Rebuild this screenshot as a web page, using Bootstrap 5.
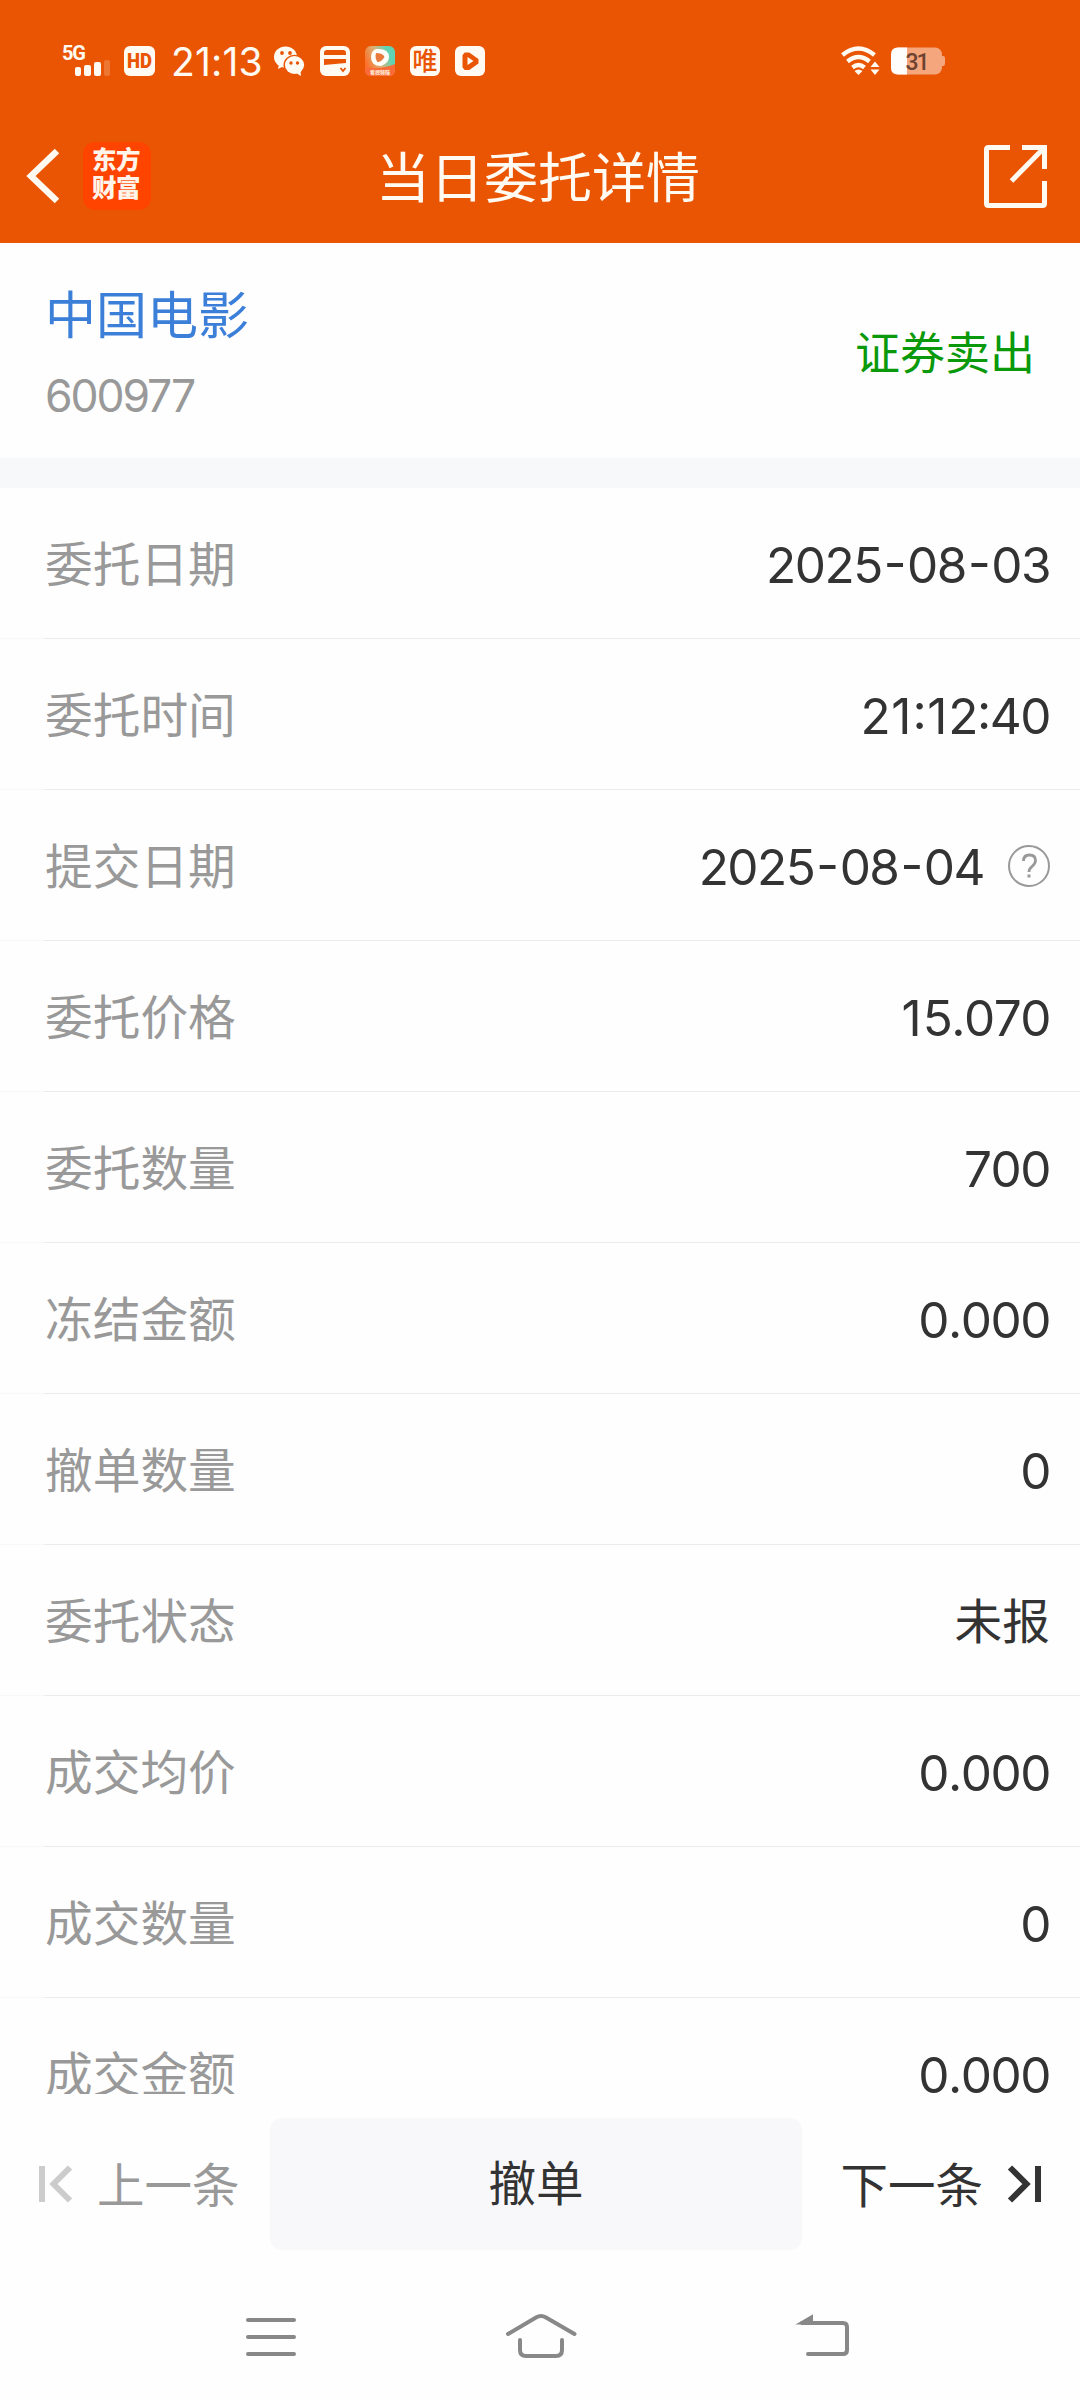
<!DOCTYPE html>
<html lang="zh-CN">
<head>
<meta charset="utf-8">
<meta name="viewport" content="width=device-width, initial-scale=1">
<title>当日委托详情</title>
<link rel="stylesheet" href="https://cdn.jsdelivr.net/npm/bootstrap@5.3.0/dist/css/bootstrap.min.css">
<style>
body{width:1080px;height:2400px;overflow:hidden;background:#fefefe;color:#333;font-family:Inter,"Noto Sans CJK SC",sans-serif;line-height:1}
svg{display:block;flex:none}
.orange-top{background:#ea5504;height:243px;color:#fffaf2}
.status-bar{height:122px;padding-left:62px;padding-right:135px}
.status-bar .sys-clock{font-size:39px;letter-spacing:.2px;margin-left:16px;width:95px;white-space:nowrap}
.app-icons{gap:15px;margin-left:8px}
.title-bar{height:108px;padding:0 33px 0 26px}
.title-text{font-size:54px;line-height:60px;padding:5px 0 0 3px}
.side-box{width:240px}
.brand-logo{width:68px;height:68px;border-radius:12px;background:#ff4400;color:#fff4ea;font:900 24.5px/28px "Noto Sans CJK SC",sans-serif;letter-spacing:-.6px;margin-left:24px;padding:0 2px 6px 0}
.stock-head{height:215px;padding:6px 45px 0}
.stock-name{font-size:51px;line-height:60px;color:#3b7fd9}
.stock-code{font-size:44.5px;letter-spacing:-2.1px;line-height:50px;color:#999;margin-top:25px}
.trade-side{font-size:45px;line-height:50px;color:#0a990a}
.gap-band{height:30px;background:#f7f8fa}
.detail-list{height:1606px;overflow:hidden}
.detail-row{height:151px;padding:6px 30px 0 45px;border-bottom:1px solid #ebebeb;border-image:linear-gradient(90deg,#f8f8f8 45px,#ebebeb 45px) 1;flex:none}
.row-label{font-size:47.7px;color:#999}
.row-value{font-size:49.5px;letter-spacing:-1.5px;color:#333;font-kerning:none;font-feature-settings:"case","calt" 0}
.row-value i{font-style:normal;letter-spacing:.5px;padding-left:2px}
.row-value b{font-weight:inherit;letter-spacing:1px;padding-left:2px}
.row-value.han{font-size:47.7px;letter-spacing:0}
.action-bar{height:188px;padding:24px 38px 0 38px;font-size:47.5px}
.cancel-btn{width:532px;height:132px;border-radius:12px;background:#f8f8fb;color:#333;font-size:47.5px;border:0}
.prev-box{width:232px;height:132px;color:#999;gap:24px}
.next-box{width:240px;height:132px;gap:24px}
.action-bar span{padding-top:3px}
.sys-nav{height:118px}
</style>
<script src="https://cdn.jsdelivr.net/npm/bootstrap@5.3.0/dist/js/bootstrap.bundle.min.js"></script>
</head>
<body class="d-flex flex-column">
<header class="orange-top flex-shrink-0">
  <div class="status-bar d-flex align-items-center">
    <svg width="49" height="32" viewBox="0 0 49 32" fill="#fffaf2" overflow="visible"><text x="0" y="14.500" font-family="Roboto" font-weight="700" font-size="20" textLength="24">5G</text><rect x="13" y="22" width="6" height="9" rx="2"/><rect x="22" y="20" width="7" height="11" rx="2"/><rect x="32" y="17" width="7" height="14" rx="2"/><rect x="42" y="15" width="6" height="16" rx="2" opacity=".2"/></svg>
    <svg width="31" height="30" viewBox="0 0 31 30" style="margin-left:13px"><rect width="31" height="30" rx="6" fill="#fffaf2"/><text x="3" y="22" font-family="Roboto" font-weight="900" font-size="19.500" fill="#ea5504" textLength="25" lengthAdjust="spacingAndGlyphs">HD</text></svg>
    <span class="sys-clock">21:13</span>
    <div class="app-icons d-flex">
      <svg width="31" height="30" viewBox="0 0 31 30"><path d="M4 23l1-5h6l-3 3z" fill="#fffaf2"/><ellipse cx="11.500" cy="11" rx="11.500" ry="10.500" fill="#fffaf2"/><g fill="#ea5504"><circle cx="8" cy="7" r="1.900"/><circle cx="16" cy="7" r="1.900"/><ellipse cx="20.500" cy="19" rx="11" ry="10.300"/></g><ellipse cx="20.500" cy="19" rx="9.600" ry="9" fill="#fffaf2"/><path d="M22 27l5 3-.5-5z" fill="#fffaf2"/><circle cx="17" cy="17" r="1.700" fill="#ea5504"/><circle cx="23.500" cy="17" r="1.700" fill="#ea5504"/></svg>
      <svg width="30" height="30" viewBox="0 0 30 30"><rect width="30" height="30" rx="6" fill="#fffaf2"/><path d="M4 9V7q0-3 3-3h16q3 0 3 3v2zM4 13h22v4L4 19z" fill="#ea5504"/><path d="M20.500 22l2.500 3 2.500-3" fill="none" stroke="#ea5504" stroke-width="1.800"/></svg>
      <svg width="30" height="30" viewBox="0 0 30 30"><defs><linearGradient id="vg" x1="0" x2="1" y1=".6" y2=".2"><stop stop-color="#ff6b25"/><stop offset=".45" stop-color="#d9b47a"/><stop offset=".8" stop-color="#5fd3b3"/></linearGradient></defs><rect width="30" height="30" rx="6" fill="url(#vg)"/><path d="M0 21q16 3 30-3v6q0 6-6 6H6q-6 0-6-6z" fill="#fb6b38"/><path d="M11 3q13-1 13 8 0 6-8 9-10 0-10-9 0-6 5-8z" fill="#fffdf8"/><path d="M11 7q7 0 8.500 4-3 5-7 5-3-4-1.500-9z" fill="#ea7a3c"/><text x="5" y="27.500" font-family="Noto Sans CJK SC" font-weight="900" font-size="5" fill="#ffe6d0">看视频赚</text></svg>
      <svg width="30" height="30" viewBox="0 0 30 30" overflow="visible"><rect width="30" height="30" rx="6" fill="#fffaf2"/><text x="2.500" y="24" font-family="Noto Sans CJK SC" font-weight="500" font-size="25" fill="#ea5504">唯</text></svg>
      <svg width="30" height="30" viewBox="0 0 30 30"><rect width="30" height="30" rx="6" fill="#fffaf2"/><path d="M10 7.500h4l8.500 6v3.500l-8.500 6H10L8.500 21V9.500z" fill="#ea5504" stroke="#ea5504" stroke-width="2" stroke-linejoin="round"/><path d="M12.500 11v8l6-4z" fill="#fffaf2"/></svg>
    </div>
    <svg class="ms-auto" width="105" height="30" viewBox="0 0 105 30"><g fill="none" stroke="#fffaf2" stroke-width="4.300"><path d="M2.500 9q16-13 32 0M7.500 15.500q11-9 22 0M12.500 21.500q6-5 12 0"/></g><path d="M14.500 25q4-3 8 0l-4 4z" fill="#fffaf2"/><path d="M30.500 21l4.500-5.500 4.500 5.500zM30.500 23.500h9L35 29z" fill="#fffaf2"/><rect x="51" y="1.500" width="51" height="27" rx="7" fill="#f5a67d"/><path d="M67 1.500h-9q-7 0-7 7v13q0 7 7 7h9z" fill="#fffdfb"/><path d="M102 10h1q2 0 2 2v6q0 2-2 2h-1z" fill="#f5a67d"/><text x="65.500" y="23.500" font-family="Roboto" font-weight="500" font-size="23" fill="#6e4130" textLength="24">31</text></svg>
  </div>
  <div class="title-bar d-flex align-items-center justify-content-between">
    <div class="side-box d-flex align-items-center">
      <svg width="33" height="56" viewBox="0 0 33 56"><path d="M31 3L5 28l26 25" fill="none" stroke="#fffaf2" stroke-width="6.500"/></svg>
      <div class="brand-logo d-flex flex-column justify-content-center text-center"><span>东方</span><span>财富</span></div>
    </div>
    <div class="title-text">当日委托详情</div>
    <div class="side-box d-flex justify-content-end">
      <svg width="63" height="63" viewBox="0 0 63 63"><g fill="none" stroke="#fffaf2" stroke-width="5"><path d="M26 2.500H4.500q-2 0-2 2v54q0 2 2 2h54q2 0 2-2V36M38 2.500h22.500V24M60 3L27.500 36"/></g></svg>
    </div>
  </div>
</header>
<section class="stock-head d-flex justify-content-between align-items-center flex-shrink-0">
  <div><div class="stock-name">中国电影</div><div class="stock-code">600977</div></div>
  <div class="trade-side">证券卖出</div>
</section>
<div class="gap-band flex-shrink-0"></div>
<main class="detail-list d-flex flex-column flex-shrink-0">
  <div class="detail-row d-flex align-items-center justify-content-between"><span class="row-label">委托日期</span><span class="row-value">2025<i>-</i>08<i>-</i>03</span></div>
  <div class="detail-row d-flex align-items-center justify-content-between"><span class="row-label">委托时间</span><span class="row-value">2<b>1</b>:<b>1</b>2:40</span></div>
  <div class="detail-row d-flex align-items-center"><span class="row-label me-auto">提交日期</span><span class="row-value">2025<i>-</i>08<i>-</i>04</span><svg class="ms-4" width="42" height="46" viewBox="0 0 42 46"><circle cx="21" cy="21" r="20" fill="none" stroke="#999" stroke-width="2"/><path d="M15.500 16q0-6 6-6t6 5.500q0 3-3.500 6-3 2.500-3 5.500" fill="none" stroke="#999" stroke-width="2.800"/><rect x="19.500" y="29.500" width="3" height="3" fill="#999"/></svg></div>
  <div class="detail-row d-flex align-items-center justify-content-between"><span class="row-label">委托价格</span><span class="row-value"><b>1</b>5.070</span></div>
  <div class="detail-row d-flex align-items-center justify-content-between"><span class="row-label">委托数量</span><span class="row-value">700</span></div>
  <div class="detail-row d-flex align-items-center justify-content-between"><span class="row-label">冻结金额</span><span class="row-value">0.000</span></div>
  <div class="detail-row d-flex align-items-center justify-content-between"><span class="row-label">撤单数量</span><span class="row-value">0</span></div>
  <div class="detail-row d-flex align-items-center justify-content-between"><span class="row-label">委托状态</span><span class="row-value han">未报</span></div>
  <div class="detail-row d-flex align-items-center justify-content-between"><span class="row-label">成交均价</span><span class="row-value">0.000</span></div>
  <div class="detail-row d-flex align-items-center justify-content-between"><span class="row-label">成交数量</span><span class="row-value">0</span></div>
  <div class="detail-row d-flex align-items-center justify-content-between"><span class="row-label">成交金额</span><span class="row-value">0.000</span></div>
</main>
<div class="action-bar d-flex flex-shrink-0">
  <div class="prev-box d-flex align-items-center"><svg width="35" height="38" viewBox="0 0 35 38"><path d="M4 1v36M32 2.500L15.500 19 32 35.500" fill="none" stroke="#ccc" stroke-width="6"/></svg><span>上一条</span></div>
  <button class="cancel-btn btn p-0" type="button"><span>撤单</span></button>
  <div class="next-box d-flex align-items-center justify-content-end"><span>下一条</span><svg width="35" height="38" viewBox="0 0 35 38"><path d="M31 1v36M3 2.500L19.500 19 3 35.500" fill="none" stroke="#333" stroke-width="6"/></svg></div>
</div>
<nav class="sys-nav flex-shrink-0">
  <svg width="1080" height="118" viewBox="0 2282 1080 118" fill="none" stroke="#888" stroke-width="4" stroke-linecap="round"><path d="M248 2320h46M248 2337h46M248 2354h46"/><path d="M508 2334l28-16.500q5-3 10 0l28.500 16.500M520 2340v10q0 6 6 6h30q6 0 6-6v-10"/><path d="M802 2323h41q4 0 4 4V2350q0 4-4 4h-35"/><path d="M799 2323.500l13-7.500v7.500z" fill="#888" stroke-width="2"/></svg>
</nav>
</body>
</html>
